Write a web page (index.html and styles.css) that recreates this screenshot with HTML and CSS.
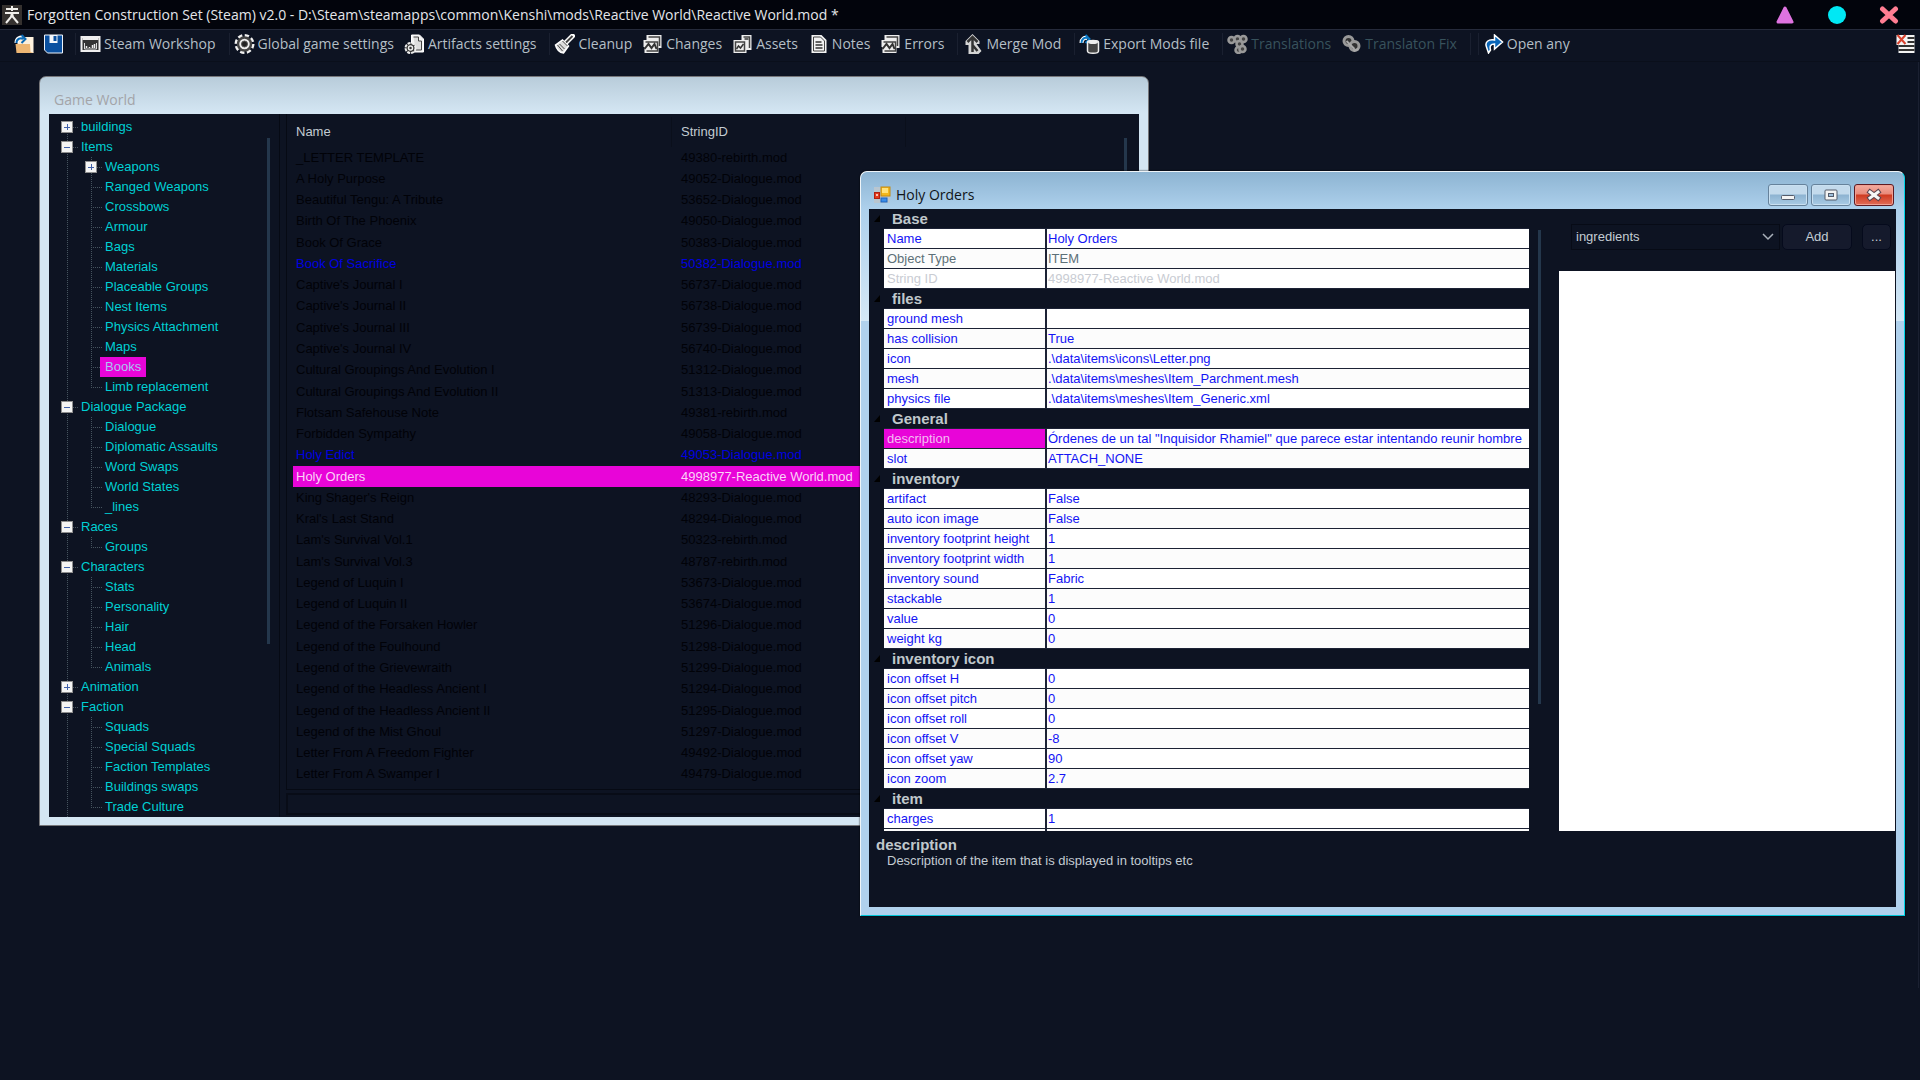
FILE: index.html
```html
<!DOCTYPE html>
<html lang="en">
<head>
<meta charset="utf-8">
<title>Forgotten Construction Set</title>
<link rel="stylesheet" href="styles.css">
</head>
<body>
<header class="titlebar">
  <svg class="app-icon" viewBox="0 0 20 20" aria-hidden="true"><rect width="20" height="20" fill="#35312f"/><path d="M4 4h12M10 1v5M3 8h14M10 8l-1 4-5 6M10 8l1 4 5 6" fill="none" stroke="#f1efec" stroke-width="2"/></svg>
  <h1 class="app-title">Forgotten Construction Set (Steam) v2.0 - D:\Steam\steamapps\common\Kenshi\mods\Reactive World\Reactive World.mod *</h1>
  <div class="caption-buttons">
    <button class="cap" aria-label="Minimize"><svg viewBox="0 0 20 20"><path d="M10 3L17 17H3Z" fill="#de73e0" stroke="#de73e0" stroke-width="3" stroke-linejoin="round"/></svg></button>
    <button class="cap" aria-label="Maximize"><svg viewBox="0 0 20 20"><circle cx="10" cy="10" r="9" fill="#00e8f4"/></svg></button>
    <button class="cap" aria-label="Close"><svg viewBox="0 0 20 20"><path d="M3.500 4l13 12M16.500 4l-13 12" stroke="#ff7d92" stroke-width="5" stroke-linecap="round"/></svg></button>
  </div>
</header>
<nav class="toolbar" aria-label="Main">
  <button class="tool icon-only" aria-label="Open"><svg viewBox="0 0 20 20"><path d="M3 6h5l2-3h8v16H3z" fill="#fbeedb"/><path d="M1 10h15l3 9H2z" fill="#edb673"/><path d="M15 3h4v16l-3-1z" fill="#fff3e0"/><path d="M2 9c0-5 4-6 7-5" fill="none" stroke="#fff" stroke-width="4"/><path d="M2 9c0-4 4-6 7-4M7 1l4 4-4 4" fill="none" stroke="#0a6ab5" stroke-width="2"/></svg></button>
  <button class="tool icon-only" aria-label="Save"><svg viewBox="0 0 20 20"><path d="M1 1h18v18H4l-3-3z" fill="#0a50a0" stroke="#eef4fb" stroke-width="1"/><path d="M6 1h8v8H6z" fill="#f3f6fa"/><path d="M10 2h3v5h-3z" fill="#0a50a0"/></svg></button>
  <i class="sep"></i>
  <button class="tool"><svg viewBox="0 0 20 20"><path d="M1 3h18v14H1z" fill="#333" stroke="#eee" stroke-width="2"/><path d="M2 4h16v2H2z" fill="#eee"/><path d="M4 9v6h12V9" fill="none" stroke="#ddd"/><path d="M6 14v-2M9 14v-1M12 14v-3M14 14v-4" stroke="#eee" stroke-width="1.500"/></svg><span>Steam Workshop</span></button>
  <i class="sep"></i>
  <button class="tool"><svg viewBox="0 0 20 20"><circle cx="10" cy="10" r="8" fill="none" stroke="#f3f3f3" stroke-width="4" stroke-dasharray="4 2.280"/><circle cx="10" cy="10" r="6.500" fill="#eee" stroke="#444" stroke-width="2.500"/><circle cx="10" cy="10" r="3" fill="#222" stroke="#555" stroke-width="1"/></svg><span>Global game settings</span></button>
  <button class="tool"><svg viewBox="0 0 20 20"><path d="M7 1h8l4 4v13H7z" fill="#f4f4f4" stroke="#fff"/><path d="M9 3h5v4h3v9h-6" fill="#ddd" stroke="#444"/><circle cx="6" cy="14" r="5" fill="#333" stroke="#eee" stroke-width="2" stroke-dasharray="3 1"/><circle cx="6" cy="14" r="2" fill="none" stroke="#eee" stroke-width="1.500"/></svg><span>Artifacts settings</span></button>
  <i class="sep"></i>
  <button class="tool"><svg viewBox="0 0 20 20"><path d="M18 2l-7 7" stroke="#fff" stroke-width="5" stroke-linecap="round"/><path d="M18 2l-7 7" stroke="#444" stroke-width="2"/><path d="M8 6l6 6-5 7c-4 0-7-4-8-8z" fill="#ddd" stroke="#fff" stroke-width="1.500"/><path d="M8 7l5 5M5 10l5 5M3 11l5 6" stroke="#444" stroke-width="1"/></svg><span>Cleanup</span></button>
  <button class="tool"><svg viewBox="0 0 20 20"><path d="M4 1h15v13h-3v5H2v-6H1V6h3z" fill="#eee"/><path d="M6 3h11v9M3 8h12v9H4" fill="none" stroke="#444" stroke-width="1.500"/><path d="M2 15l4-5 3 4 3-4 2 5" fill="none" stroke="#333" stroke-width="2"/></svg><span>Changes</span></button>
  <button class="tool"><svg viewBox="0 0 20 20"><path d="M9 1h10v15h-5v3H1V6h8z" fill="#eee"/><path d="M11 3h6v11M3 8h9v9H3z" fill="none" stroke="#444" stroke-width="1.500"/><path d="M4 15l2-3 2 2 3-4M12 5h4" fill="none" stroke="#333" stroke-width="1.500"/></svg><span>Assets</span></button>
  <button class="tool"><svg viewBox="0 0 20 20"><path d="M3 1h10l5 5v13H3z" fill="#f3f3f3"/><path d="M5 3h7l4 4v10H5z" fill="none" stroke="#444"/><path d="M7 8h6M7 11h7M7 14h7" stroke="#333" stroke-width="1.500"/></svg><span>Notes</span></button>
  <button class="tool"><svg viewBox="0 0 20 20"><path d="M4 1h15v13h-3v5H2v-6H1V6h3z" fill="#eee"/><path d="M6 3h11v9M3 8h12v9H4" fill="none" stroke="#444" stroke-width="1.500"/><path d="M2 15l4-5 3 4 3-4 2 5" fill="none" stroke="#333" stroke-width="2"/></svg><span>Errors</span></button>
  <i class="sep"></i>
  <button class="tool"><svg viewBox="0 0 20 20"><path d="M10 0l7 7v3h-3l5 7-3 3H6v-9H3V7z" fill="#d5d5d5"/><path d="M10 3v15M5 8l5-5 5 5M10 11l5 6" fill="none" stroke="#333" stroke-width="2.500"/></svg><span>Merge Mod</span></button>
  <i class="sep"></i>
  <button class="tool"><svg viewBox="0 0 20 20"><path d="M2 9c0-4 3-6 6-5" fill="none" stroke="#fff" stroke-width="4"/><path d="M2 9c0-4 3-6 6-5M6 1l4 4-4 4" fill="none" stroke="#0a78c5" stroke-width="2"/><path d="M8 8c0-2 11-2 11 0v9c0 3-11 3-11 0z" fill="#444" stroke="#eee" stroke-width="1.500"/><ellipse cx="13.500" cy="8" rx="5" ry="2" fill="#eee"/></svg><span>Export Mods file</span></button>
  <i class="sep"></i>
  <button class="tool" disabled><svg viewBox="0 0 20 20"><g fill="#444" stroke="#999" stroke-width="2.500"><circle cx="4" cy="6" r="3"/><circle cx="10" cy="5" r="3"/><circle cx="16" cy="5" r="3"/><circle cx="12" cy="10" r="3"/><circle cx="11" cy="16" r="3"/><circle cx="15" cy="15" r="3"/></g></svg><span>Translations</span></button>
  <button class="tool" disabled><svg viewBox="0 0 20 20"><g fill="#333" stroke="#999" stroke-width="3"><circle cx="7" cy="7" r="4.500"/><circle cx="13" cy="12" r="4.500"/></g><path d="M5 7l8 8M12 17l5-2" stroke="#aaa" stroke-width="2"/></svg><span>Translaton Fix</span></button>
  <i class="sep"></i>
  <i class="sep"></i>
  <button class="tool"><svg viewBox="0 0 20 20"><path d="M3 13C1 8 5 5 11 6V1l8 7-8 7v-5c-4 0-5 2-4 6l-2 3z" fill="#0a66b8" stroke="#fff" stroke-width="1.500"/></svg><span>Open any</span></button>
  <button class="tool icon-only last" aria-label="Clear list"><svg viewBox="0 0 20 20"><path d="M1 1h18v18H3v-8H1z" fill="#f4f4f4"/><path d="M12 4h7M12 8h7M3 12h16M3 16h16" stroke="#333" stroke-width="2"/><path d="M2 1l8 9M10 1L2 10" stroke="#d8422e" stroke-width="2"/></svg></button>
</nav>
<main class="desktop">
  <section class="window world" aria-label="Game World">
    <h2 class="window-title">Game World</h2>
    <div class="client world-client">
      <div class="tree-pane">
        <ul class="tree">
          <li><div class="row"><button class="toggle plus" aria-label="Expand"></button><a href="#" class="node">buildings</a></div></li>
          <li><div class="row"><button class="toggle" aria-label="Collapse"></button><a href="#" class="node">Items</a></div>
            <ul class="branch">
              <li><button class="toggle plus" aria-label="Expand"></button><a href="#" class="node">Weapons</a></li>
              <li><a href="#" class="node">Ranged Weapons</a></li>
              <li><a href="#" class="node">Crossbows</a></li>
              <li><a href="#" class="node">Armour</a></li>
              <li><a href="#" class="node">Bags</a></li>
              <li><a href="#" class="node">Materials</a></li>
              <li><a href="#" class="node">Placeable Groups</a></li>
              <li><a href="#" class="node">Nest Items</a></li>
              <li><a href="#" class="node">Physics Attachment</a></li>
              <li><a href="#" class="node">Maps</a></li>
              <li><a href="#" class="node selected">Books</a></li>
              <li><a href="#" class="node">Limb replacement</a></li>
            </ul></li>
          <li><div class="row"><button class="toggle" aria-label="Collapse"></button><a href="#" class="node">Dialogue Package</a></div>
            <ul class="branch">
              <li><a href="#" class="node">Dialogue</a></li>
              <li><a href="#" class="node">Diplomatic Assaults</a></li>
              <li><a href="#" class="node">Word Swaps</a></li>
              <li><a href="#" class="node">World States</a></li>
              <li><a href="#" class="node">_lines</a></li>
            </ul></li>
          <li><div class="row"><button class="toggle" aria-label="Collapse"></button><a href="#" class="node">Races</a></div>
            <ul class="branch">
              <li><a href="#" class="node">Groups</a></li>
            </ul></li>
          <li><div class="row"><button class="toggle" aria-label="Collapse"></button><a href="#" class="node">Characters</a></div>
            <ul class="branch">
              <li><a href="#" class="node">Stats</a></li>
              <li><a href="#" class="node">Personality</a></li>
              <li><a href="#" class="node">Hair</a></li>
              <li><a href="#" class="node">Head</a></li>
              <li><a href="#" class="node">Animals</a></li>
            </ul></li>
          <li><div class="row"><button class="toggle plus" aria-label="Expand"></button><a href="#" class="node">Animation</a></div></li>
          <li><div class="row"><button class="toggle" aria-label="Collapse"></button><a href="#" class="node">Faction</a></div>
            <ul class="branch">
              <li><a href="#" class="node">Squads</a></li>
              <li><a href="#" class="node">Special Squads</a></li>
              <li><a href="#" class="node">Faction Templates</a></li>
              <li><a href="#" class="node">Buildings swaps</a></li>
              <li><a href="#" class="node">Trade Culture</a></li>
            </ul></li>
        </ul>
        <div class="rail tree-rail"><i class="thumb"></i></div>
      </div>
      <div class="list-pane">
        <div class="list-box">
          <table class="list">
            <colgroup><col class="c-name"><col class="c-id"><col></colgroup>
            <thead><tr><th>Name</th><th>StringID</th><th></th></tr></thead>
            <tbody>
              <tr><td>_LETTER TEMPLATE</td><td>49380-rebirth.mod</td><td></td></tr>
              <tr><td>A Holy Purpose</td><td>49052-Dialogue.mod</td><td></td></tr>
              <tr><td>Beautiful Tengu: A Tribute</td><td>53652-Dialogue.mod</td><td></td></tr>
              <tr><td>Birth Of The Phoenix</td><td>49050-Dialogue.mod</td><td></td></tr>
              <tr><td>Book Of Grace</td><td>50383-Dialogue.mod</td><td></td></tr>
              <tr class="changed"><td>Book Of Sacrifice</td><td>50382-Dialogue.mod</td><td></td></tr>
              <tr><td>Captive's Journal I</td><td>56737-Dialogue.mod</td><td></td></tr>
              <tr><td>Captive's Journal II</td><td>56738-Dialogue.mod</td><td></td></tr>
              <tr><td>Captive's Journal III</td><td>56739-Dialogue.mod</td><td></td></tr>
              <tr><td>Captive's Journal IV</td><td>56740-Dialogue.mod</td><td></td></tr>
              <tr><td>Cultural Groupings And Evolution I</td><td>51312-Dialogue.mod</td><td></td></tr>
              <tr><td>Cultural Groupings And Evolution II</td><td>51313-Dialogue.mod</td><td></td></tr>
              <tr><td>Flotsam Safehouse Note</td><td>49381-rebirth.mod</td><td></td></tr>
              <tr><td>Forbidden Sympathy</td><td>49058-Dialogue.mod</td><td></td></tr>
              <tr class="changed"><td>Holy Edict</td><td>49053-Dialogue.mod</td><td></td></tr>
              <tr class="active"><td>Holy Orders</td><td>4998977-Reactive World.mod</td><td></td></tr>
              <tr><td>King Shager's Reign</td><td>48293-Dialogue.mod</td><td></td></tr>
              <tr><td>Kral's Last Stand</td><td>48294-Dialogue.mod</td><td></td></tr>
              <tr><td>Lam's Survival Vol.1</td><td>50323-rebirth.mod</td><td></td></tr>
              <tr><td>Lam's Survival Vol.3</td><td>48787-rebirth.mod</td><td></td></tr>
              <tr><td>Legend of Luquin I</td><td>53673-Dialogue.mod</td><td></td></tr>
              <tr><td>Legend of Luquin II</td><td>53674-Dialogue.mod</td><td></td></tr>
              <tr><td>Legend of the Forsaken Howler</td><td>51296-Dialogue.mod</td><td></td></tr>
              <tr><td>Legend of the Foulhound</td><td>51298-Dialogue.mod</td><td></td></tr>
              <tr><td>Legend of the Grievewraith</td><td>51299-Dialogue.mod</td><td></td></tr>
              <tr><td>Legend of the Headless Ancient I</td><td>51294-Dialogue.mod</td><td></td></tr>
              <tr><td>Legend of the Headless Ancient II</td><td>51295-Dialogue.mod</td><td></td></tr>
              <tr><td>Legend of the Mist Ghoul</td><td>51297-Dialogue.mod</td><td></td></tr>
              <tr><td>Letter From A Freedom Fighter</td><td>49492-Dialogue.mod</td><td></td></tr>
              <tr><td>Letter From A Swamper I</td><td>49479-Dialogue.mod</td><td></td></tr>
            </tbody>
          </table>
          <div class="rail list-rail"><i class="thumb"></i></div>
        </div>
        <input class="filter" type="text" aria-label="Filter">
      </div>
    </div>
  </section>

  <section class="window item" aria-label="Holy Orders">
    <div class="window-head">
      <svg class="form-icon" viewBox="0 0 18 18" aria-hidden="true"><rect x="1" y="1" width="16" height="16" fill="#b9c6d0"/><rect x="8" y="1" width="9" height="9" fill="#f3b81c" stroke="#c48a10"/><rect x="9" y="2" width="6" height="5" fill="#ffe27a"/><rect x="1.500" y="6.500" width="5" height="6" fill="#e33a1e" stroke="#b02010"/><rect x="3" y="8" width="2" height="2" fill="#ffc0b0"/><rect x="8" y="12" width="6" height="4" fill="#3b8de8" stroke="#1d63bd"/></svg>
      <h2 class="window-title">Holy Orders</h2>
      <div class="frame-buttons">
        <button class="frame-btn" aria-label="Minimize"><svg viewBox="0 0 16 16"><rect x="1.500" y="8.500" width="13" height="4" rx="1" fill="#f4f4f4" stroke="#555c6b"/></svg></button>
        <button class="frame-btn" aria-label="Maximize"><svg viewBox="0 0 16 16"><rect x="2" y="3" width="12" height="10" rx="1" fill="#f4f4f4" stroke="#555c6b"/><rect x="5.500" y="6.500" width="5" height="3" fill="#9fc0dc" stroke="#555c6b"/></svg></button>
        <button class="frame-btn close" aria-label="Close"><svg viewBox="0 0 16 16"><path d="M4 5l8 6M12 5l-8 6" stroke="#5b4450" stroke-width="5" stroke-linecap="square"/><path d="M4 5l8 6M12 5l-8 6" stroke="#f6f6f6" stroke-width="3" stroke-linecap="square"/></svg></button>
      </div>
    </div>
    <div class="client item-client">
      <div class="props-pane">
        <div class="props-box">
          <table class="props">
            <colgroup><col class="c-gutter"><col class="c-prop"><col></colgroup>
            <tbody>
              <tr class="cat"><td><i class="tri"></i></td><th colspan="2">Base</th></tr>
              <tr><td></td><th>Name</th><td>Holy Orders</td></tr>
              <tr class="readonly"><td></td><th>Object Type</th><td>ITEM</td></tr>
              <tr class="faint"><td></td><th>String ID</th><td>4998977-Reactive World.mod</td></tr>
            </tbody>
            <tbody>
              <tr class="cat"><td><i class="tri"></i></td><th colspan="2">files</th></tr>
              <tr><td></td><th>ground mesh</th><td></td></tr>
              <tr><td></td><th>has collision</th><td>True</td></tr>
              <tr><td></td><th>icon</th><td>.\data\items\icons\Letter.png</td></tr>
              <tr><td></td><th>mesh</th><td>.\data\items\meshes\Item_Parchment.mesh</td></tr>
              <tr><td></td><th>physics file</th><td>.\data\items\meshes\Item_Generic.xml</td></tr>
            </tbody>
            <tbody>
              <tr class="cat"><td><i class="tri"></i></td><th colspan="2">General</th></tr>
              <tr class="active"><td></td><th>description</th><td>Órdenes de un tal "Inquisidor Rhamiel" que parece estar intentando reunir hombre</td></tr>
              <tr><td></td><th>slot</th><td>ATTACH_NONE</td></tr>
            </tbody>
            <tbody>
              <tr class="cat"><td><i class="tri"></i></td><th colspan="2">inventory</th></tr>
              <tr><td></td><th>artifact</th><td>False</td></tr>
              <tr><td></td><th>auto icon image</th><td>False</td></tr>
              <tr><td></td><th>inventory footprint height</th><td>1</td></tr>
              <tr><td></td><th>inventory footprint width</th><td>1</td></tr>
              <tr><td></td><th>inventory sound</th><td>Fabric</td></tr>
              <tr><td></td><th>stackable</th><td>1</td></tr>
              <tr><td></td><th>value</th><td>0</td></tr>
              <tr><td></td><th>weight kg</th><td>0</td></tr>
            </tbody>
            <tbody>
              <tr class="cat"><td><i class="tri"></i></td><th colspan="2">inventory icon</th></tr>
              <tr><td></td><th>icon offset H</th><td>0</td></tr>
              <tr><td></td><th>icon offset pitch</th><td>0</td></tr>
              <tr><td></td><th>icon offset roll</th><td>0</td></tr>
              <tr><td></td><th>icon offset V</th><td>-8</td></tr>
              <tr><td></td><th>icon offset yaw</th><td>90</td></tr>
              <tr><td></td><th>icon zoom</th><td>2.7</td></tr>
            </tbody>
            <tbody>
              <tr class="cat"><td><i class="tri"></i></td><th colspan="2">item</th></tr>
              <tr><td></td><th>charges</th><td>1</td></tr>
              <tr><td></td><th></th><td></td></tr>
            </tbody>
          </table>
          <div class="rail props-rail"><i class="thumb"></i></div>
        </div>
        <div class="help">
          <h3>description</h3>
          <p>Description of the item that is displayed in tooltips etc</p>
        </div>
      </div>
      <div class="refs-pane">
        <div class="refs-bar">
          <div class="combo">
            <select aria-label="Reference list"><option>ingredients</option></select>
            <svg viewBox="0 0 12 8" aria-hidden="true"><path d="M1 1l5 5 5-5" fill="none" stroke="#a9b0ba" stroke-width="1.500"/></svg>
          </div>
          <button class="btn add">Add</button>
          <button class="btn more">...</button>
        </div>
        <div class="refs-list"></div>
      </div>
    </div>
  </section>
</main>
</body>
</html>
```
FILE: styles.css
```css
* { box-sizing: border-box; }

body {
  margin: 0;
  min-height: 100vh;
  display: flex;
  flex-direction: column;
  background: #0d1322;
  color: #c3ccd3;
  font: 13px/20px "Liberation Sans", Arial, sans-serif;
  overflow: hidden;
}

h1, h2, h3, p, ul { margin: 0; padding: 0; font-size: inherit; font-weight: normal; }
ul { list-style: none; }
button, input, select { font: inherit; color: inherit; margin: 0; padding: 0; border: 0; background: none; }
svg { display: block; }
table { border-collapse: separate; border-spacing: 0; table-layout: fixed; }
th { text-align: left; font-weight: normal; }
th, td { padding: 0; white-space: nowrap; overflow: hidden; }

/* application title bar */
.titlebar {
  display: flex;
  align-items: center;
  height: 29px;
  padding: 0 21px 0 2px;
  background: #02040c;
}
.app-icon { width: 20px; height: 20px; }
.app-title {
  flex: 1;
  padding-left: 5px;
  font: 14px/28px "Open Sans", sans-serif;
  color: #e4e6ea;
  white-space: nowrap;
}
.caption-buttons { display: flex; gap: 32px; }
.cap svg { width: 20px; height: 20px; }

/* toolbar */
.toolbar {
  display: flex;
  align-items: center;
  height: 33px;
  padding: 0 4px 4px 14px;
  border-top: 1px solid #252a3b;
  border-bottom: 1px solid #0a0f1b;
  font: 14px/26px "Open Sans", sans-serif;
}
.tool { display: flex; align-items: center; gap: 3px; margin-right: 10px; white-space: nowrap; color: #b4bfc6; }
.tool.icon-only { margin-right: 8px; }
.tool svg { width: 21px; height: 20px; }
.tool:disabled { color: #38525c; }
.tool.last { margin: 0 0 0 auto; }
.sep { width: 1px; height: 22px; margin: 0 4px 0 3px; background: #1a2030; }

/* desktop with floating tool windows */
.desktop {
  flex: 1;
  position: relative;
  background: linear-gradient(#1a2031, #1a2031) no-repeat right 1px top / 1px 926px;
}
.window { position: absolute; display: flex; flex-direction: column; border-radius: 7px 7px 0 0; }
.window-title { font: 14px/20px "Open Sans", sans-serif; }
.client { flex: 1; min-height: 0; background: #0d1322; }

.rail { display: flex; justify-content: center; }
.thumb { width: 3px; background: #24374c; }

/* Game World */
.world {
  left: 39px;
  top: 14px;
  width: 1110px;
  height: 750px;
  padding: 0 9px 8px;
  border: 1px solid #77777a;
  background: linear-gradient(#b8ccda, #d4e6f3 36px);
}
.world .window-title { padding: 13px 0 4px 5px; color: #a3a4a8; }
.world-client { display: flex; }
.tree-pane { display: flex; width: 231px; border-right: 1px solid #060a14; overflow: hidden; }
.tree-rail { width: 22px; padding: 24px 0 173px; }
.tree {
  flex: 1;
  padding: 3px 0 0 12px;
  background: repeating-linear-gradient(#46545f 0 1px, transparent 1px 2px) no-repeat 18px 14px / 1px 100%;
}
.row, .branch > li { display: flex; align-items: center; height: 20px; }
.row { background: repeating-linear-gradient(90deg, #46545f 0 1px, transparent 1px 2px) no-repeat 12px 10px / 5px 1px; }
.branch { padding-left: 30px; }
.branch > li {
  padding-left: 9px;
  background:
    repeating-linear-gradient(#46545f 0 1px, transparent 1px 2px) no-repeat 0 0 / 1px 100%,
    repeating-linear-gradient(90deg, #46545f 0 1px, transparent 1px 2px) no-repeat 0 10px / 11px 1px;
}
.branch > li:last-child { background-size: 1px 10px, 11px 1px; }
.branch .toggle { margin: 0 3px 0 -15px; }
.row .toggle { margin-right: 3px; }
.toggle {
  width: 12px;
  height: 12px;
  border: 1px solid #8f8f8f;
  background: linear-gradient(#3f5fa8, #3f5fa8) no-repeat center / 6px 1px, #f4f4f4;
}
.toggle.plus {
  background: linear-gradient(#3f5fa8, #3f5fa8) no-repeat center / 6px 1px, linear-gradient(#3f5fa8, #3f5fa8) no-repeat center / 1px 6px, #f4f4f4;
}
.node { padding: 0 5px; color: #00d0d4; text-decoration: none; white-space: nowrap; }
.node.selected { background: #e805d8; color: #a9c6f2; }

.list-pane { flex: 1; min-width: 0; display: flex; flex-direction: column; gap: 3px; margin-left: 6px; padding-bottom: 2px; }
.list-box { flex: 1; display: flex; border: solid #060a14; border-width: 0 0 1px 1px; padding: 3px 0 4px 6px; }
.list { flex: 1; width: 100%; height: 100%; color: #010208; }
.list-rail { width: 27px; padding: 21px 0 150px; }
.c-name { width: 379px; }
.c-id { width: 234px; }
.list thead th { height: 30px; padding-left: 3px; vertical-align: middle; color: #c3ccd3; border-right: 1px solid #0a0f1b; }
.list thead th:last-child { border-right: 0; }
.list td { padding-left: 3px; line-height: 20px; }
.list thead th + th, .list td + td { padding-left: 9px; }
.list .changed { color: #0000e0; }
.list .active { background: #e805d8; color: #fbd3f7; }
.filter { height: 22px; border: 2px solid #080c17; }

/* Holy Orders */
.item {
  left: 860px;
  top: 109px;
  width: 1045px;
  height: 745px;
  padding: 0 8px 8px 8px;
  border: 1px solid #eef4f8;
  border-right-color: #00d5e8;
  border-bottom-color: #00c5d8;
  background:
    linear-gradient(#8db4d2, #add0ec) no-repeat 0 0 / 100% 37px,
    linear-gradient(#add0ec, #d5e8f6) no-repeat 0 37px / 100% 112px,
    #b0d1ed;
  box-shadow: 0 0 2px #000;
}
.window-head { display: flex; align-items: center; height: 37px; padding: 8px 2px 0 4px; }
.form-icon { width: 18px; height: 18px; }
.item .window-title { flex: 1; padding-left: 5px; color: #101418; }
.frame-buttons { display: flex; gap: 3px; }
.frame-btn {
  display: grid;
  place-items: center;
  width: 40px;
  height: 22px;
  border: 1px solid #66829b;
  border-radius: 3px;
  background: linear-gradient(#c3daec 45%, #8db3d1 50%, #a9cbe5);
  box-shadow: inset 0 0 0 1px #c9e0f1;
}
.frame-btn svg { width: 16px; height: 16px; }
.frame-btn.close {
  border-color: #5e1a22;
  background: linear-gradient(#f3aca0, #e98a7a 45%, #cf3a20 50%, #e06d58);
  box-shadow: inset 0 0 0 1px #f0a093;
}
.item-client { display: flex; }
.props-pane { width: 678px; display: flex; flex-direction: column; }
.props-box { display: flex; height: 622px; overflow: hidden; }
.props { flex: 1; width: 100%; height: max-content; color: #1414f5; }
.props-rail { width: 16px; padding: 21px 0 127px; margin-left: 2px; }
.c-gutter { width: 15px; }
.c-prop { width: 163px; }
.props tr { height: 20px; }
.props th, .props td { height: 20px; line-height: 19px; padding-left: 3px; border-bottom: 1px solid #1c2235; }
.props tr > td:first-child { padding: 0; border-bottom-color: transparent; }
.props tr:not(.cat) th { border-right: 2px solid #1c2235; }
.props tr:not(.cat) th, .props td + td, .props th + td { background: #fff; }
.props tr:nth-child(odd) th, .props tr:nth-child(odd) th + td { background-color: #fcfcfc; }
.props th + td { padding-left: 1px; }
.props tr.cat th { padding-left: 8px; font-size: 15px; font-weight: bold; color: #c0c8cc; background: none; }
.props .readonly { color: #5d7078; }
.props .faint { color: #c9ccd3; }
.props tbody .active th { background: #e805d8; color: #f4bdf3; }
.tri { display: block; width: 6px; height: 7px; margin-left: 5px; background: #000; clip-path: polygon(100% 0, 100% 100%, 0 100%); }
.help { padding: 6px 0 0 7px; line-height: 16px; }
.help h3 { font-size: 15px; font-weight: bold; color: #c0c8cc; }
.help p { padding-left: 11px; }

.refs-pane { flex: 1; display: flex; flex-direction: column; gap: 21px; margin-left: 12px; padding: 15px 1px 76px 0; }
.refs-bar { display: flex; align-items: center; height: 26px; padding: 0 4px 0 12px; }
.combo { flex: 1; display: grid; align-items: center; height: 26px; border: 1px solid #070b16; }
.combo select, .combo svg { grid-area: 1 / 1; }
.combo select { appearance: none; height: 24px; padding-left: 4px; }
.combo svg { width: 12px; height: 8px; margin-right: 5px; justify-self: end; pointer-events: none; }
.btn { height: 26px; border: 1px solid #050a1c; border-radius: 5px; background: #151a2c; }
.add { width: 70px; margin-left: 2px; }
.more { width: 29px; margin-left: 10px; }
.refs-list { flex: 1; background: #fff; }
```
